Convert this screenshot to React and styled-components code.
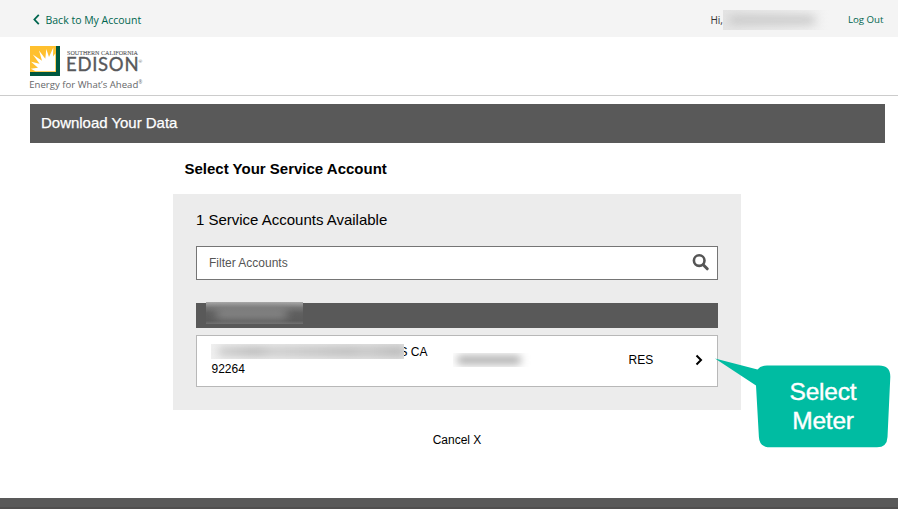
import React from "react";
import styled, { createGlobalStyle } from "styled-components";

const GlobalStyle = createGlobalStyle`
  * { box-sizing: border-box; }
  body { margin: 0; background: #fff; overflow: hidden; }
  h1, h2, h3 { margin: 0; font-weight: 400; }
  button { border: 0; background: none; padding: 0; font: inherit; color: inherit; }
`;

const Page = styled.div`
  width: 100%;
  height: 100vh;
  display: flex;
  flex-direction: column;
  color: #000;
  font-family: "Liberation Sans", Arial, sans-serif;
  font-size: 12px;
`;

const TopBar = styled.nav`
  height: 37px;
  flex: none;
  display: flex;
  align-items: center;
  padding: 2px 14.5px 0 33px;
  background: #f4f4f4;
  font-family: "Open Sans", sans-serif;
`;

const TopLink = styled.a`
  display: flex;
  align-items: center;
  gap: 5.5px;
  color: #00664f;
  font-size: ${(p) => p.$size};
  line-height: 16px;
  white-space: nowrap;
`;

const Greeting = styled.div`
  display: flex;
  align-items: center;
  margin-left: auto;
  margin-right: 19px;
  color: #333;
  font-size: 10px;
  line-height: 20px;
`;

const Redacted = styled.span`
  display: block;
  flex: none;
  overflow: hidden;
  width: ${(p) => p.$w}px;
  height: ${(p) => p.$h}px;
  padding: ${(p) => p.$pad};
  background: ${(p) => p.$bg || "transparent"};
  &::before {
    content: "";
    display: block;
    height: 100%;
    border-radius: 3px;
    background: ${(p) => p.$ink};
    filter: blur(${(p) => p.$blur || 3}px);
  }
`;

const Header = styled.header`
  height: 59px;
  flex: none;
  padding: 8px 0 0 29px;
  border-bottom: 1px solid #ccc;
`;

const Main = styled.main`
  flex: 1;
  display: flex;
  flex-direction: column;
  padding: 8px 13px 0 30px;
`;

const TitleBar = styled.h1`
  height: 39px;
  flex: none;
  padding-left: 11px;
  background: #595959;
  color: #fff;
  font-size: 15px;
  line-height: 38px;
  letter-spacing: -0.02px;
  -webkit-text-stroke: 0.25px #fff;
`;

const Content = styled.section`
  width: 568px;
  margin-left: 143px;
  display: flex;
  flex-direction: column;
`;

const Heading = styled.h2`
  height: 51px;
  padding-left: 11.5px;
  font-size: 15px;
  font-weight: 700;
  line-height: 52px;
`;

const Panel = styled.div`
  height: 216px;
  padding: 0 23px;
  background: #ececec;
  display: flex;
  flex-direction: column;
`;

const Count = styled.h3`
  height: 52px;
  font-size: 15px;
  line-height: 52px;
  letter-spacing: -0.01px;
`;

const Search = styled.div`
  height: 34px;
  display: flex;
  align-items: center;
  justify-content: space-between;
  padding: 0 8px 1px 12px;
  border: 1px solid #757575;
  background: #fff;
  color: #555;
`;

const GroupBar = styled.div`
  height: 25px;
  margin-top: 23px;
  padding-left: 10px;
  background: #595959;
  display: flex;
  align-items: flex-start;
`;

const GroupName = styled.div`
  margin-top: -1px;
`;

const AccountRow = styled.button`
  height: 52px;
  margin-top: 7px;
  border: 1px solid #b8b8b8;
  background: #fff;
  display: grid;
  grid-template-columns: 241px 176px 1fr 22px;
  align-items: center;
  padding: 0 0 2px 14.5px;
  text-align: left;
`;

const Address = styled.div`
  line-height: 17px;
  padding-top: 1px;
`;

const AddressLine = styled.div`
  display: flex;
  height: 17px;
`;

const AddressMask = styled.div`
  z-index: 1;
  margin-left: -1px;
  margin-right: -4px;
`;

const Cancel = styled.button`
  align-self: center;
  margin-top: 20px;
  line-height: 20px;
`;

const Footer = styled.footer`
  height: 11px;
  flex: none;
  background: #595959;
  border-bottom: 2px solid #504f4f;
`;

const Callout = styled.aside`
  position: absolute;
  left: 714px;
  top: 356px;
  width: 180px;
  height: 94px;
`;

const CalloutShape = styled.svg`
  position: absolute;
  inset: 0;
`;

const CalloutText = styled.div`
  position: absolute;
  left: 44px;
  top: 21px;
  width: 130px;
  color: #fff;
  text-align: center;
  font-family: "Liberation Sans", Arial, sans-serif;
  font-size: 24.5px;
  line-height: 29px;
  letter-spacing: -0.2px;
  -webkit-text-stroke: 0.4px #fff;
`;

function Logo() {
  return (
    <svg width="116" height="48" viewBox="0 0 116 48" role="img" aria-label="Southern California Edison">
      <rect x="1" y="1" width="26" height="26" fill="#ffc02e" />
      <path d="M27 1h4v30H1v-4h26z" fill="#00583f" />
      <path
        d="M26.300 26.300H6.500L1.800 23.800l7.200-1.100L2 16.800l8.600 2L3.800 9.500l9.200 6.300L10 5.500l6.300 8.200L17.300 4l2.700 8L24.300 2.500 24 11.500l2.300-3z"
        fill="#fff"
      />
      <g fill="#58595b" stroke="#58595b" fontFamily="Lato, sans-serif">
        <text x="38" y="9.800" fontSize="6.200" textLength="71" lengthAdjust="spacingAndGlyphs" strokeWidth="0.1" fontFamily="Liberation Serif, serif">SOUTHERN CALIFORNIA</text>
        <text x="37" y="26.300" fontSize="18.500" textLength="72.500" lengthAdjust="spacing" strokeWidth="0.35">EDISON</text>
        <text x="109.500" y="18" fontSize="4.500" stroke="none">®</text>
      </g>
      <g fill="#66676a" fontFamily="Open Sans, sans-serif">
        <text x="0.300" y="42.600" fontSize="9.600" textLength="109" lengthAdjust="spacingAndGlyphs">Energy for What’s Ahead</text>
        <text x="109.500" y="38.500" fontSize="4.500">®</text>
      </g>
    </svg>
  );
}

function Chevron({ left }) {
  return left ? (
    <svg width="7" height="11" viewBox="0 0 7 11">
      <path d="M5.800 .8L1.400 5.500l4.400 4.700" fill="none" stroke="#00664f" strokeWidth="1.800" />
    </svg>
  ) : (
    <svg width="8" height="12" viewBox="0 0 8 12">
      <path d="M1.500 1.500L6 6l-4.500 4.500" fill="none" stroke="#000" strokeWidth="2" />
    </svg>
  );
}

function SearchIcon() {
  return (
    <svg width="17" height="17" viewBox="0 0 17 17" fill="none" stroke="#555">
      <circle cx="7.200" cy="6.600" r="5.300" strokeWidth="2.600" />
      <path d="M11.200 10.800l4 4" strokeWidth="3" strokeLinecap="round" />
    </svg>
  );
}

export default function App() {
  return (
    <>
      <GlobalStyle />
      <Page>
        <TopBar>
          <TopLink $size="10.5px">
            <Chevron left />
            Back to My Account
          </TopLink>
          <Greeting>
            Hi,
            <Redacted $w={106} $h={20} $pad="6px 14px 6px 6px" $bg="linear-gradient(90deg, #e4e4e4, #ececec 70%, #f4f4f4)" $ink="#c6c6c6" $blur={5} />
          </Greeting>
          <TopLink $size="9.7px">Log Out</TopLink>
        </TopBar>
        <Header>
          <Logo />
        </Header>
        <Main>
          <TitleBar>Download Your Data</TitleBar>
          <Content>
            <Heading>Select Your Service Account</Heading>
            <Panel>
              <Count>1 Service Accounts Available</Count>
              <Search>
                Filter Accounts
                <SearchIcon />
              </Search>
              <GroupBar>
                <GroupName>
                  <Redacted
                    $w={97}
                    $h={22}
                    $pad="8px 16px 6px 10px"
                    $bg="linear-gradient(#aaa, #777 25%, #606060 50%, #5b5b5b 85%, #707070)"
                    $ink="#929292"
                    $blur={5}
                  />
                </GroupName>
              </GroupBar>
              <AccountRow>
                <Address>
                  <AddressLine>
                    <AddressMask>
                      <Redacted
                        $w={193}
                        $h={15}
                        $pad="3px 0 3px 7px"
                        $bg="linear-gradient(90deg, #f0f0f0, #e0e0e0)"
                        $ink="linear-gradient(90deg, #ccc, #b6b6b6 20%, #cacaca 30%, #bababa 70%, #c4c4c4 80%, #b2b2b2)"
                        $blur={4}
                      />
                    </AddressMask>
                    S CA
                  </AddressLine>
                  <AddressLine>92264</AddressLine>
                </Address>
                <Redacted $w={80} $h={14} $pad="3px 12px 3px 4px" $ink="#a4a4a4" $blur={4} />
                <span>RES</span>
                <Chevron />
              </AccountRow>
            </Panel>
            <Cancel>Cancel X</Cancel>
          </Content>
        </Main>
        <Footer />
      </Page>
      <Callout>
        <CalloutShape width="180" height="94" viewBox="0 0 180 94">
          <path
            d="M1 2.500L43.500 13.500Q46.500 9.500 53 9.500H165Q176.500 9.500 176.300 21L173.500 81Q173 91.300 163 91.300H56Q45.500 91.300 44.900 81L42 29.500Z"
            fill="#00bca2"
          />
        </CalloutShape>
        <CalloutText>
          Select
          <br />
          Meter
        </CalloutText>
      </Callout>
    </>
  );
}
